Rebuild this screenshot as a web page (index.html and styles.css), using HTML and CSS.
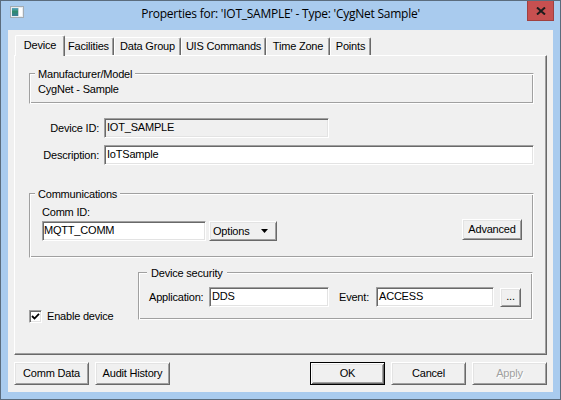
FILE: index.html
```html
<!DOCTYPE html>
<html>
<head>
<meta charset="utf-8">
<title>Properties</title>
<link rel="stylesheet" href="styles.css">
</head>
<body>
<div class="window">
  <div class="titlebar">
    <span class="app-icon">
      <svg width="14" height="12" viewBox="0 0 14 12">
        <defs>
          <linearGradient id="ig" x1="0" y1="0" x2="0" y2="1">
            <stop offset="0" stop-color="#5fa8c8"/>
            <stop offset="0.45" stop-color="#2f8a6a"/>
            <stop offset="1" stop-color="#3b7f9a"/>
          </linearGradient>
        </defs>
        <rect x="0.5" y="0.5" width="13" height="11" fill="#e9edf0" stroke="#a3acb4"/>
        <rect x="2" y="2" width="6" height="8" fill="url(#ig)"/>
        <rect x="9" y="2" width="3" height="8" fill="#ffffff"/>
        <rect x="8" y="2" width="1" height="8" fill="#c9d0d6"/>
      </svg>
    </span>
    <span class="title">Properties for: 'IOT_SAMPLE' - Type: 'CygNet Sample'</span>
    <span class="close">
      <svg width="10" height="8" viewBox="0 0 10 8">
        <path d="M1 0.5 L9 7.5 M9 0.5 L1 7.5" stroke="#1c1c1c" stroke-width="2" fill="none"/>
      </svg>
    </span>
  </div>

  <div class="client">
    <div class="tabs">
      <div class="tab active t-device">Device</div>
      <div class="tab t-fac">Facilities</div>
      <div class="tab t-dg">Data Group</div>
      <div class="tab t-uis">UIS Commands</div>
      <div class="tab t-tz">Time Zone</div>
      <div class="tab t-pts">Points</div>
    </div>

    <div class="panel">
      <div class="group manuf">
        <div class="legend">Manufacturer/Model</div>
        <div class="static">CygNet - Sample</div>
      </div>

      <div class="row row-id">
        <span class="lbl">Device ID:</span>
        <div class="edit readonly w-id">IOT_SAMPLE</div>
      </div>
      <div class="row row-desc">
        <span class="lbl">Description:</span>
        <div class="edit w-desc">IoTSample</div>
      </div>

      <div class="group comm">
        <div class="legend">Communications</div>
        <div class="comm-label">Comm ID:</div>
        <div class="comm-row">
          <div class="edit w-comm">MQTT_COMM</div>
          <div class="btn btn-options">
            <span>Options</span>
            <svg width="7" height="4" viewBox="0 0 7 4"><polygon points="0,0 7,0 3.5,4" fill="#000"/></svg>
          </div>
          <div class="btn btn-adv">Advanced</div>
        </div>
      </div>

      <div class="bottom-row">
        <div class="check-row">
          <span class="checkbox">
            <svg width="9" height="9" viewBox="0 0 9 9"><polyline points="1,4 3.5,6.5 8,1.8" stroke="#000" stroke-width="1.8" fill="none"/></svg>
          </span>
          <span>Enable device</span>
        </div>
        <div class="group security">
          <div class="legend">Device security</div>
          <div class="sec-row">
            <span class="l-app">Application:</span>
            <div class="edit w-app">DDS</div>
            <span class="l-event">Event:</span>
            <div class="edit w-event">ACCESS</div>
            <div class="btn btn-dots">...</div>
          </div>
        </div>
      </div>
    </div>

    <div class="buttons">
      <div class="btn push">Comm Data</div>
      <div class="btn push">Audit History</div>
      <div class="spacer"></div>
      <div class="btn push default">OK</div>
      <div class="btn push">Cancel</div>
      <div class="btn push disabled">Apply</div>
    </div>
  </div>
</div>
</body>
</html>
```

FILE: styles.css
```css
html, body {
  margin: 0;
  padding: 0;
}

body {
  font-family: "Liberation Sans", Arial, sans-serif;
  font-size: 11px;
  letter-spacing: -0.2px;
  color: #000;
  background: #a9cbee;
}

.window {
  width: 561px;
  height: 400px;
  box-sizing: border-box;
  border: 1px solid #5b6c7d;
  background: #a9cbee;
  display: flex;
  flex-direction: column;
}

/* title bar */
.titlebar {
  height: 29px;
  flex: 0 0 29px;
  display: grid;
  grid-template-columns: 1fr auto 1fr;
  align-items: start;
}

.app-icon {
  justify-self: start;
  margin: 5px 0 0 9px;
  display: flex;
}

.title {
  font-family: "Open Sans", "Noto Sans", sans-serif;
  font-size: 12px;
  letter-spacing: -0.25px;
  line-height: 16px;
  margin-top: 5px;
  white-space: nowrap;
  color: #000;
}

.close {
  justify-self: end;
  margin-right: 6px;
  width: 27px;
  height: 20px;
  box-sizing: border-box;
  background: #c75050;
  border: 1px solid #a04040;
  border-top: none;
  display: flex;
  align-items: center;
  justify-content: center;
}

/* client area */
.client {
  flex: 1;
  margin: 0 7px 7px;
  background: #f0f0f0;
  padding: 5px 6px 0;
  display: flex;
  flex-direction: column;
  box-sizing: border-box;
}

/* tabs */
.tabs {
  height: 20px;
  flex: 0 0 20px;
  display: flex;
  align-items: flex-end;
  padding-left: 3px;
}

.tab {
  height: 18px;
  box-sizing: border-box;
  border-top: 1px solid #fff;
  border-left: 1px solid #fff;
  border-right: 1px solid #696969;
  box-shadow: inset -1px 0 0 #a0a0a0;
  border-radius: 2px 2px 0 0;
  text-align: center;
  line-height: 13px;
  padding-top: 2px;
  white-space: nowrap;
}

.tab.active {
  height: 21px;
  margin: 0 -2px -1px;
  position: relative;
  z-index: 1;
  background: #f0f0f0;
  padding-top: 3px;
}

.t-device { width: 50px; }
.t-fac { width: 51px; }
.t-dg { width: 67px; }
.t-uis { width: 85px; }
.t-tz { width: 64px; }
.t-pts { width: 41px; }

/* panel */
.panel {
  height: 300px;
  flex: 0 0 300px;
  box-sizing: border-box;
  border: 1px solid;
  border-color: #fff #696969 #696969 #fff;
  box-shadow: inset -1px -1px 0 #a0a0a0;
  padding: 17px 0 0 0;
  display: flex;
  flex-direction: column;
  align-items: flex-start;
}

/* group boxes */
.group {
  box-sizing: border-box;
  width: 505px;
  margin-left: 14px;
  border: 1px solid;
  border-color: #a0a0a0 #fff #fff #a0a0a0;
  box-shadow: inset 1px 1px 0 #fff, inset -1px -1px 0 #a0a0a0;
}

.legend {
  width: fit-content;
  background: #f0f0f0;
  line-height: 13px;
  margin-top: -6px;
  padding: 0 3px;
  white-space: nowrap;
}

.manuf {
  height: 31px;
  padding: 0 8px;
}

.manuf .legend {
  margin-left: -3px;
}

.static {
  margin-top: 2px;
  line-height: 13px;
}

/* label + edit rows */
.row {
  display: flex;
  align-items: center;
  margin-top: 14px;
}

.row-desc {
  margin-top: 7px;
}

.lbl {
  width: 84px;
  text-align: right;
  margin-right: 5px;
  white-space: nowrap;
}

.edit {
  height: 20px;
  box-sizing: border-box;
  border: 1px solid;
  border-color: #a0a0a0 #fff #fff #a0a0a0;
  box-shadow: inset 1px 1px 0 #696969, inset -1px -1px 0 #e3e3e3;
  background: #fff;
  padding-left: 2px;
  line-height: 16px;
  white-space: nowrap;
}

.readonly {
  background: #f0f0f0;
}

.w-id { width: 225px; }
.w-desc { width: 430px; }

/* communications */
.comm {
  margin-top: 28px;
  height: 65px;
  padding: 0 11px 0 12px;
}

.comm .legend {
  margin-left: -7px;
}

.comm-label {
  margin-top: 5px;
  line-height: 13px;
}

.comm-row {
  display: flex;
  align-items: flex-start;
  margin-top: 2px;
}

.w-comm {
  width: 164px;
  padding-left: 1px;
}

/* buttons */
.btn {
  box-sizing: border-box;
  display: flex;
  align-items: center;
  justify-content: center;
  background: #f0f0f0;
  border: 1px solid;
  border-color: #fff #696969 #696969 #fff;
  box-shadow: inset 1px 1px 0 #e3e3e3, inset -1px -1px 0 #a0a0a0;
  line-height: 13px;
  white-space: nowrap;
}

.btn-options {
  width: 68px;
  height: 20px;
  margin-left: 3px;
  justify-content: space-between;
  padding: 0 8px 0 3px;
}

.btn-adv {
  width: 60px;
  height: 21px;
  margin-left: auto;
  margin-top: -2px;
}

/* bottom row: checkbox + security */
.bottom-row {
  display: flex;
  align-items: flex-start;
  margin-top: 14px;
}

.check-row {
  width: 123px;
  box-sizing: border-box;
  padding-left: 14px;
  margin-top: 38px;
  display: flex;
  align-items: center;
  line-height: 13px;
  white-space: nowrap;
}

.checkbox {
  width: 13px;
  height: 13px;
  box-sizing: border-box;
  border: 1px solid;
  border-color: #a0a0a0 #fff #fff #a0a0a0;
  box-shadow: inset 1px 1px 0 #696969, inset -1px -1px 0 #e3e3e3;
  background: #fff;
  margin-right: 5px;
  display: flex;
  align-items: center;
  justify-content: center;
}

.security {
  width: 395px;
  height: 48px;
  margin-left: 0;
  padding: 0 0 0 10px;
}

.security .legend {
  margin-left: -2px;
  padding: 0 4px;
}

.sec-row {
  display: flex;
  align-items: center;
  margin-top: 7px;
}

.l-app {
  width: 60px;
  white-space: nowrap;
}

.w-app { width: 120px; }

.l-event {
  width: 37px;
  margin-left: 10px;
  white-space: nowrap;
}

.w-event { width: 118px; }

.btn-dots {
  width: 21px;
  height: 19px;
  margin-left: 6px;
  align-items: flex-end;
  padding-bottom: 3px;
}

/* dialog buttons */
.buttons {
  display: flex;
  gap: 6px;
  margin-top: 7px;
}

.push {
  width: 75px;
  height: 23px;
}

.spacer {
  flex: 1;
}

.btn.default {
  border-color: #000;
  box-shadow: inset 1px 1px 0 #fff, inset -1px -1px 0 #696969, inset 2px 2px 0 #e3e3e3, inset -2px -2px 0 #a0a0a0;
}

.btn.disabled {
  color: #a0a0a0;
  text-shadow: 1px 1px 0 #fff;
}
```
